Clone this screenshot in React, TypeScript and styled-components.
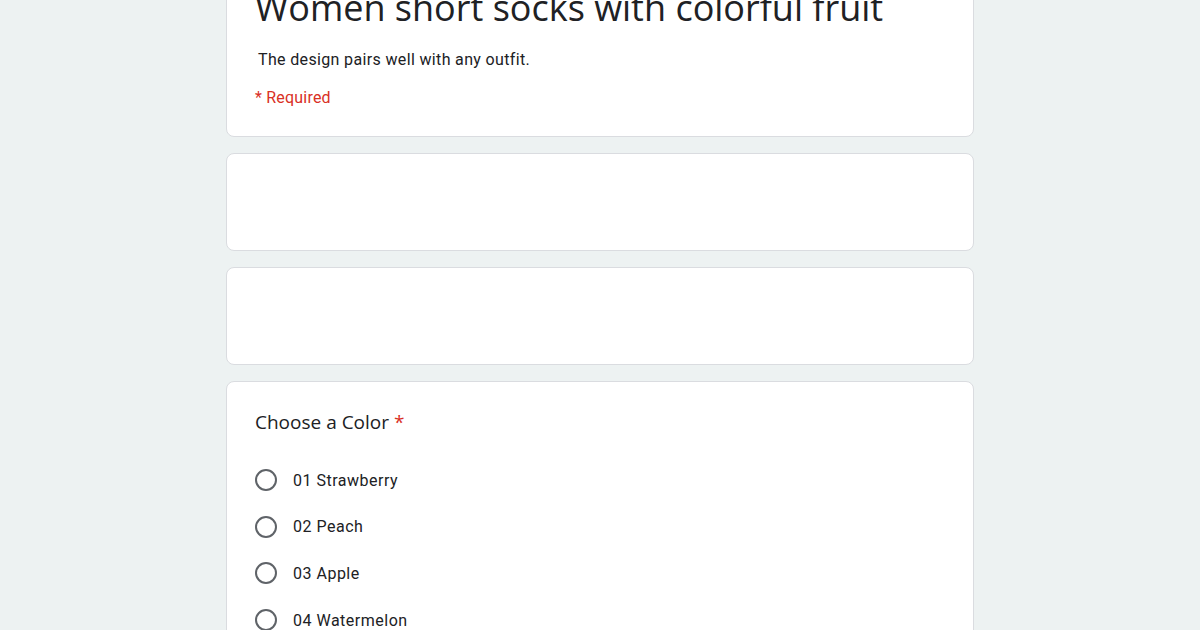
import React from 'react'
import styled, { createGlobalStyle } from 'styled-components'

const GlobalStyle = createGlobalStyle`
  html, body {
    margin: 0;
    padding: 0;
    background: #edf2f2;
    overflow: hidden;
  }
`

const Page = styled.div`
  width: 1200px;
  height: 630px;
  overflow: hidden;
  display: flex;
  justify-content: center;
  align-items: flex-start;
`

const Column = styled.div`
  width: 748px;
  margin-top: -41px;
  display: flex;
  flex-direction: column;
  gap: 16px;
`

const Card = styled.div<{ $height?: number }>`
  flex: none;
  background: #ffffff;
  border: 1px solid #dadce0;
  border-radius: 8px;
  box-sizing: border-box;
  height: ${p => (p.$height ? `${p.$height}px` : 'auto')};
  padding: 0 28px;
`

const HeaderCard = styled(Card)`
  padding-top: 24px;
  padding-bottom: 28px;
`

const Title = styled.div`
  font-family: "Open Sans", sans-serif;
  font-size: 36px;
  line-height: 48px;
  color: #202124;
  white-space: nowrap;
`

const Description = styled.div`
  font-family: Roboto, sans-serif;
  font-size: 16px;
  letter-spacing: 0.35px;
  color: #202124;
  margin-top: 18px;
  padding-left: 3px;
  line-height: 20px;
`

const Required = styled.div`
  font-family: Roboto, sans-serif;
  font-size: 16px;
  letter-spacing: 0.2px;
  color: #d93025;
  margin-top: 18px;
  line-height: 20px;
`

const QuestionCard = styled(Card)`
  padding-top: 28px;
  padding-bottom: 40px;
`

const Question = styled.div`
  font-family: "Open Sans", sans-serif;
  font-size: 19px;
  color: #202124;
  line-height: 24px;
  margin-bottom: 34px;
`

const Star = styled.span`
  color: #d93025;
  margin-left: 5px;
`

const Options = styled.div`
  display: flex;
  flex-direction: column;
  gap: 22.7px;
`

const Option = styled.label`
  display: flex;
  align-items: center;
  gap: 16px;
  height: 24px;
  font-family: Roboto, sans-serif;
  font-size: 16px;
  letter-spacing: 0.5px;
  color: #202124;
`

const Radio = styled.span`
  width: 18px;
  height: 18px;
  border: 2px solid #5f6368;
  border-radius: 50%;
  flex: none;
`

const colors = ['01 Strawberry', '02 Peach', '03 Apple', '04 Watermelon', '05 Lemon']

export default function App() {
  return (
    <Page>
      <GlobalStyle />
      <Column>
        <HeaderCard>
          <Title>Women short socks with colorful fruit</Title>
          <Description>The design pairs well with any outfit.</Description>
          <Required>* Required</Required>
        </HeaderCard>
        <Card $height={98} />
        <Card $height={98} />
        <QuestionCard>
          <Question>
            Choose a Color<Star>*</Star>
          </Question>
          <Options>
            {colors.map(c => (
              <Option key={c}>
                <Radio />
                {c}
              </Option>
            ))}
          </Options>
        </QuestionCard>
      </Column>
    </Page>
  )
}
